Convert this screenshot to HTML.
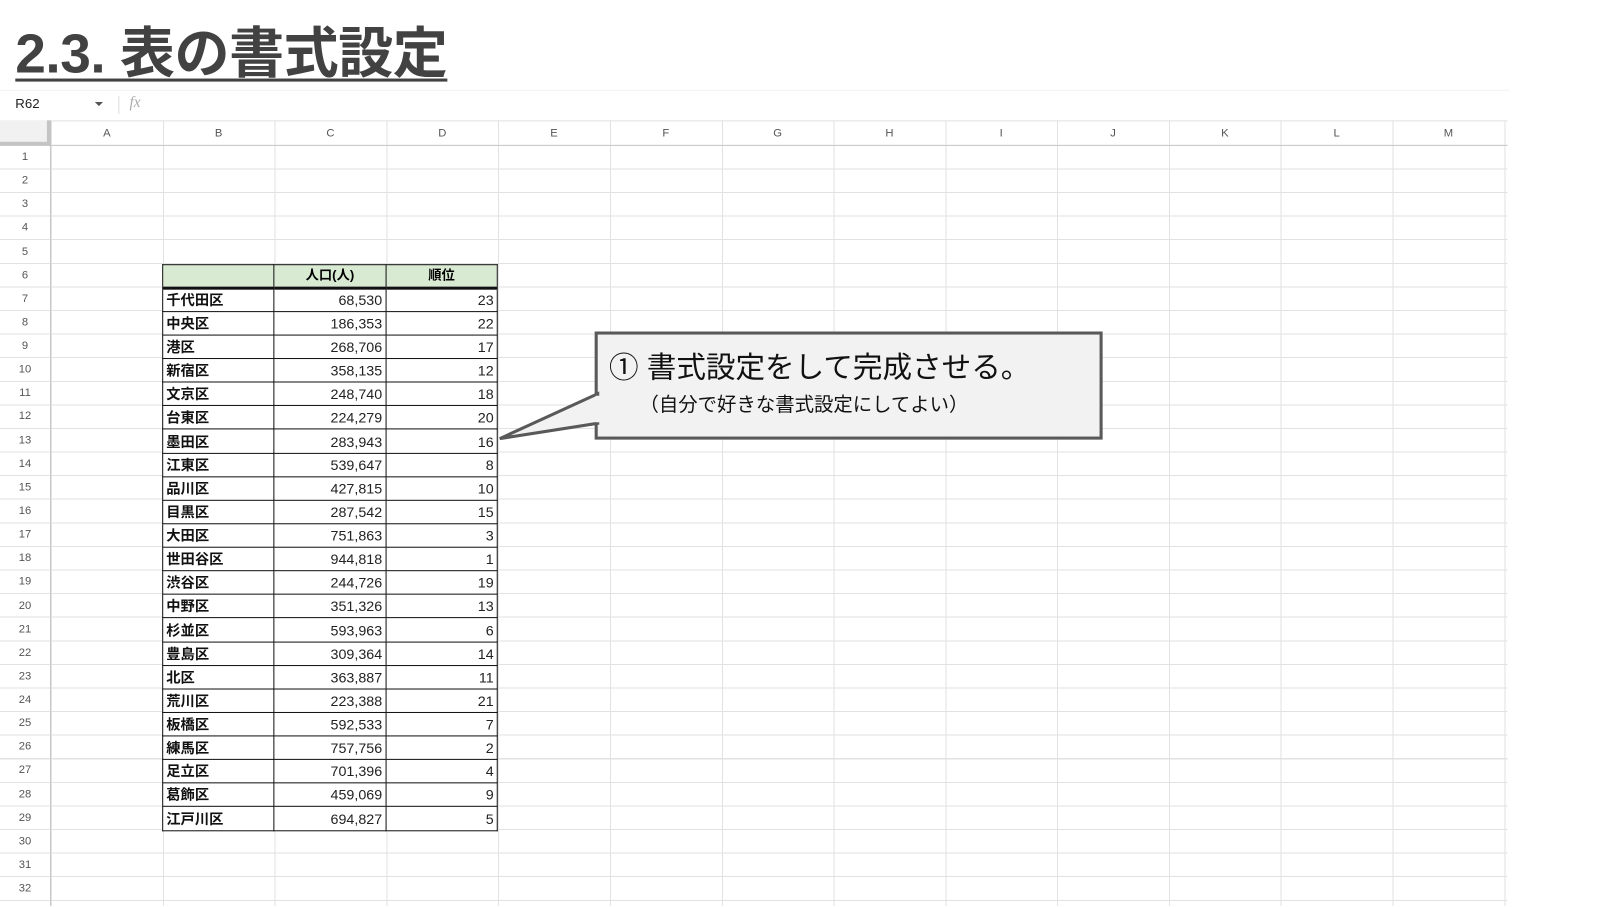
<!DOCTYPE html>
<html><head><meta charset="utf-8"><style>
*{margin:0;padding:0;box-sizing:border-box}
body{width:1600px;height:900px;background:#fff;position:relative;overflow:hidden;font-family:"Liberation Sans","Noto Sans CJK JP",sans-serif}
#w{position:absolute;left:0;top:0;width:1570px;height:883px;transform:scale(1.02);transform-origin:0 0}
.title{position:absolute;left:15px;top:8px;font-size:54px;font-weight:bold;color:#424242;text-decoration:underline;text-decoration-thickness:3px;text-underline-offset:6px;letter-spacing:-0.5px;white-space:nowrap}
.fbar{position:absolute;left:0;top:88px;width:1480px;height:30px;border-top:1px solid #f0f0f0}
.namebox{position:absolute;left:15px;top:94px;font-size:13px;color:#222}
.arrow{position:absolute;left:93px;top:100px;width:0;height:0;border-left:4px solid transparent;border-right:4px solid transparent;border-top:4px solid #555}
.sep{position:absolute;left:116px;top:94px;width:1px;height:18px;background:#ddd}
.fx{position:absolute;left:127px;top:93px;font-size:15px;font-style:italic;color:#aaa;font-family:"Liberation Serif",serif}
.grid{position:absolute;left:50px;top:118px;width:1428px;height:770px;
background-image:repeating-linear-gradient(to right,#e2e2e2 0 1px,transparent 1px 109.6px),repeating-linear-gradient(to bottom,transparent 0 24px,#e2e2e2 24px 25px,transparent 25px 770px);}
.rows{position:absolute;left:0;top:143px;width:1478px;height:746px;background-image:repeating-linear-gradient(to bottom,transparent 0 22.13px,#e2e2e2 22.13px 23.13px)}
.colhdr{position:absolute;left:0;top:118px;width:1478px;height:25px;border-bottom:1px solid #c8c8c8;border-top:1px solid #e2e2e2}
.ch{position:absolute;top:0;height:24px;line-height:24px;width:109.6px;text-align:center;font-size:11px;color:#555}
.corner{position:absolute;left:0;top:118px;width:50px;height:25px;background:#f1f1f1;border-right:4px solid #c4c4c4;border-bottom:4px solid #c4c4c4}
.rh{position:absolute;left:0;width:49px;height:23.13px;line-height:23px;text-align:center;font-size:11px;color:#555}
.rhline{position:absolute;left:49px;top:143px;width:1px;height:745px;background:#c8c8c8}
table{position:absolute;left:159px;top:258.6px;width:329px;border-collapse:collapse;table-layout:fixed;background:#fff}
td{border:1.5px solid #111;height:23.13px;font-size:14px;padding:0 3px;line-height:18px;white-space:nowrap;overflow:hidden}
td.n{text-align:right;color:#222}
td.l{font-weight:bold;color:#111}
tr.h td{background:#d9ead3;font-weight:bold;text-align:center;font-size:13px;border-bottom:3px solid #111}
.callout{position:absolute;left:583px;top:325px;width:498px;height:106px;background:#f2f2f2;border:3px solid #595959}
.c1{position:absolute;left:597px;top:337px;font-size:29px;color:#111;white-space:nowrap}
.c2{position:absolute;left:627px;top:382px;font-size:19px;color:#111;white-space:nowrap}
</style></head><body><div id="w">
<div class="title">2.3. 表の書式設定</div>
<div class="fbar"></div>
<div class="namebox">R62</div><div class="arrow"></div><div class="sep"></div><div class="fx">fx</div>
<div class="rows"></div>
<div class="grid"></div>
<div class="colhdr">
<div class="ch" style="left:50px">A</div><div class="ch" style="left:159.6px">B</div><div class="ch" style="left:269.2px">C</div><div class="ch" style="left:378.8px">D</div><div class="ch" style="left:488.4px">E</div><div class="ch" style="left:598px">F</div><div class="ch" style="left:707.6px">G</div><div class="ch" style="left:817.2px">H</div><div class="ch" style="left:926.8px">I</div><div class="ch" style="left:1036.4px">J</div><div class="ch" style="left:1146px">K</div><div class="ch" style="left:1255.6px">L</div><div class="ch" style="left:1365.2px">M</div>
</div>
<div class="corner"></div>
<div class="rhline"></div>
<div class="rh" style="top:143px">1</div><div class="rh" style="top:166.1px">2</div><div class="rh" style="top:189.3px">3</div><div class="rh" style="top:212.4px">4</div><div class="rh" style="top:235.5px">5</div><div class="rh" style="top:258.7px">6</div><div class="rh" style="top:281.8px">7</div><div class="rh" style="top:304.9px">8</div><div class="rh" style="top:328px">9</div><div class="rh" style="top:351.2px">10</div><div class="rh" style="top:374.3px">11</div><div class="rh" style="top:397.4px">12</div><div class="rh" style="top:420.6px">13</div><div class="rh" style="top:443.7px">14</div><div class="rh" style="top:466.8px">15</div><div class="rh" style="top:490px">16</div><div class="rh" style="top:513.1px">17</div><div class="rh" style="top:536.2px">18</div><div class="rh" style="top:559.3px">19</div><div class="rh" style="top:582.5px">20</div><div class="rh" style="top:605.6px">21</div><div class="rh" style="top:628.7px">22</div><div class="rh" style="top:651.9px">23</div><div class="rh" style="top:675px">24</div><div class="rh" style="top:698.1px">25</div><div class="rh" style="top:721.3px">26</div><div class="rh" style="top:744.4px">27</div><div class="rh" style="top:767.5px">28</div><div class="rh" style="top:790.6px">29</div><div class="rh" style="top:813.8px">30</div><div class="rh" style="top:836.9px">31</div><div class="rh" style="top:860px">32</div>
<table>
<tr class="h"><td></td><td>人口(人)</td><td>順位</td></tr>
<tr><td class="l">千代田区</td><td class="n">68,530</td><td class="n">23</td></tr>
<tr><td class="l">中央区</td><td class="n">186,353</td><td class="n">22</td></tr>
<tr><td class="l">港区</td><td class="n">268,706</td><td class="n">17</td></tr>
<tr><td class="l">新宿区</td><td class="n">358,135</td><td class="n">12</td></tr>
<tr><td class="l">文京区</td><td class="n">248,740</td><td class="n">18</td></tr>
<tr><td class="l">台東区</td><td class="n">224,279</td><td class="n">20</td></tr>
<tr><td class="l">墨田区</td><td class="n">283,943</td><td class="n">16</td></tr>
<tr><td class="l">江東区</td><td class="n">539,647</td><td class="n">8</td></tr>
<tr><td class="l">品川区</td><td class="n">427,815</td><td class="n">10</td></tr>
<tr><td class="l">目黒区</td><td class="n">287,542</td><td class="n">15</td></tr>
<tr><td class="l">大田区</td><td class="n">751,863</td><td class="n">3</td></tr>
<tr><td class="l">世田谷区</td><td class="n">944,818</td><td class="n">1</td></tr>
<tr><td class="l">渋谷区</td><td class="n">244,726</td><td class="n">19</td></tr>
<tr><td class="l">中野区</td><td class="n">351,326</td><td class="n">13</td></tr>
<tr><td class="l">杉並区</td><td class="n">593,963</td><td class="n">6</td></tr>
<tr><td class="l">豊島区</td><td class="n">309,364</td><td class="n">14</td></tr>
<tr><td class="l">北区</td><td class="n">363,887</td><td class="n">11</td></tr>
<tr><td class="l">荒川区</td><td class="n">223,388</td><td class="n">21</td></tr>
<tr><td class="l">板橋区</td><td class="n">592,533</td><td class="n">7</td></tr>
<tr><td class="l">練馬区</td><td class="n">757,756</td><td class="n">2</td></tr>
<tr><td class="l">足立区</td><td class="n">701,396</td><td class="n">4</td></tr>
<tr><td class="l">葛飾区</td><td class="n">459,069</td><td class="n">9</td></tr>
<tr><td class="l">江戸川区</td><td class="n">694,827</td><td class="n">5</td></tr>
</table>
<div class="callout"></div>
<svg style="position:absolute;left:0;top:0" width="1570" height="883"><polygon points="586,386 490,430 586,415" fill="#f2f2f2" stroke="#595959" stroke-width="3" stroke-linejoin="miter"/><rect x="584" y="388" width="6" height="26" fill="#f2f2f2"/></svg>
<div class="c1">① 書式設定をして完成させる。</div>
<div class="c2">（自分で好きな書式設定にしてよい）</div>
</div></body></html>
